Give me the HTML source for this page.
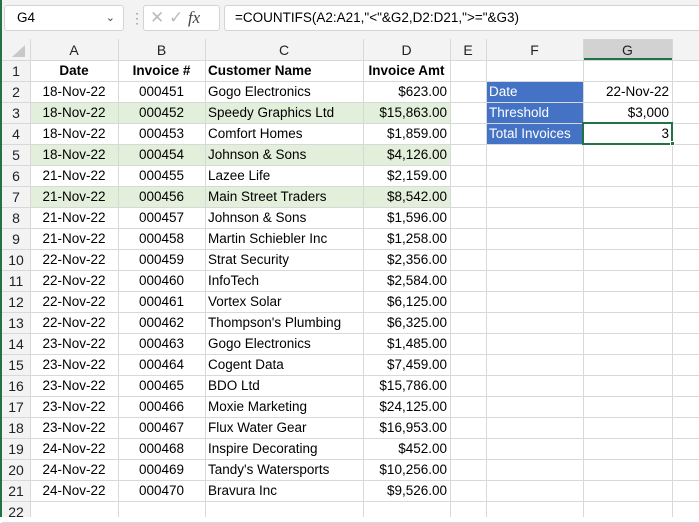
<!DOCTYPE html>
<html><head><style>
*{margin:0;padding:0;box-sizing:border-box}
body{width:699px;height:517px;overflow:hidden;background:#fff;font-family:"Liberation Sans",sans-serif;position:relative;font-size:13.5px;color:#000}
.top{position:absolute;left:0;top:0;width:699px;height:39px;background:#f3f3f3;border-left:2px solid #217346}
.box{position:absolute;background:#fff;border:1px solid #d4d4d4;border-radius:3px;height:26px;top:5px;line-height:24px}
.c{position:absolute;height:21px;line-height:22px;white-space:nowrap;overflow:hidden;padding:0 3px}
.gl{position:absolute;background:#d8d8d8}
</style></head><body>
<div class="top">
<div class="box" style="left:2px;width:120px;padding-left:12px">G4<span style="position:absolute;right:8px;top:0;font-size:11px;color:#444">&#8964;</span></div>
<div style="position:absolute;left:128px;top:10px;color:#999;font-size:14px">&#8942;</div>
<div class="box" style="left:141px;width:77px;color:#bbb;font-size:17px;padding-left:6px">&#10005; &#10003; <i style="color:#444;font-family:'Liberation Serif';font-size:17px">fx</i></div>
<div class="box" style="left:222px;width:480px;padding-left:10px;font-size:13.5px">=COUNTIFS(A2:A21,"&lt;"&amp;G2,D2:D21,"&gt;="&amp;G3)</div>
</div>
<div style="position:absolute;left:0;top:39px;width:2px;height:478px;background:#217346"></div>
<div id="g"></div>
<script>
var cols=[[30,118,'A','c'],[118,205,'B','c'],[205,363,'C','l'],[363,450,'D','r'],[450,486,'E','c'],[486,583,'F','l'],[583,672,'G','r'],[672,720,'','l']];
var data=[
["Date","Invoice #","Customer Name","Invoice Amt"],
["18-Nov-22","000451","Gogo Electronics","$623.00"],
["18-Nov-22","000452","Speedy Graphics Ltd","$15,863.00"],
["18-Nov-22","000453","Comfort Homes","$1,859.00"],
["18-Nov-22","000454","Johnson & Sons","$4,126.00"],
["21-Nov-22","000455","Lazee Life","$2,159.00"],
["21-Nov-22","000456","Main Street Traders","$8,542.00"],
["21-Nov-22","000457","Johnson & Sons","$1,596.00"],
["21-Nov-22","000458","Martin Schiebler Inc","$1,258.00"],
["22-Nov-22","000459","Strat Security","$2,356.00"],
["22-Nov-22","000460","InfoTech","$2,584.00"],
["22-Nov-22","000461","Vortex Solar","$6,125.00"],
["22-Nov-22","000462","Thompson's Plumbing","$6,325.00"],
["23-Nov-22","000463","Gogo Electronics","$1,485.00"],
["23-Nov-22","000464","Cogent Data","$7,459.00"],
["23-Nov-22","000465","BDO Ltd","$15,786.00"],
["23-Nov-22","000466","Moxie Marketing","$24,125.00"],
["23-Nov-22","000467","Flux Water Gear","$16,953.00"],
["24-Nov-22","000468","Inspire Decorating","$452.00"],
["24-Nov-22","000469","Tandy's Watersports","$10,256.00"],
["24-Nov-22","000470","Bravura Inc","$9,526.00"]];
var h='';
var T=60,R=21;
h+='<div style="position:absolute;left:2px;top:39px;width:697px;height:21px;background:#f3f3f3"></div>';
h+='<div style="position:absolute;left:2px;top:60px;width:28px;height:457px;background:#f3f3f3"></div>';
h+='<div style="position:absolute;left:583px;top:39px;width:89px;height:21px;background:#d2d2d2;border-bottom:2px solid #217346"></div>';
h+='<div style="position:absolute;left:12px;top:45px;width:0;height:0;border-left:13px solid transparent;border-bottom:12px solid #c8c8c8"></div>';
[3,5,7].forEach(function(r){h+='<div style="position:absolute;left:30px;top:'+(T+R*(r-1))+'px;width:420px;height:'+R+'px;background:#e2efda"></div>';});
h+='<div style="position:absolute;left:486px;top:'+(T+R)+'px;width:97px;height:'+(R*3)+'px;background:#4472c4"></div>';
for(var r=0;r<=22;r++){h+='<div class="gl" style="left:2px;top:'+(T+R*r)+'px;width:697px;height:1px"></div>';}
cols.forEach(function(c){h+='<div class="gl" style="left:'+c[0]+'px;top:39px;width:1px;height:478px"></div>';});
cols.forEach(function(c){h+='<div class="c" style="left:'+c[0]+'px;top:39px;width:'+(c[1]-c[0])+'px;text-align:center;font-size:14px;color:#222">'+c[2]+'</div>';});
for(var r=1;r<=22;r++){h+='<div class="c" style="left:2px;top:'+(T+R*(r-1))+'px;width:28px;text-align:center;font-size:14px;color:#222">'+r+'</div>';}
data.forEach(function(row,i){
 row.forEach(function(v,j){var c=cols[j];var al=c[3]=='c'?'center':c[3]=='r'?'right':'left';
 if(i==0)al='center';if(i==0&&j==2)al='left';
 h+='<div class="c" style="left:'+c[0]+'px;top:'+(T+R*i)+'px;width:'+(c[1]-c[0])+'px;text-align:'+al+';'+(i==0?'font-weight:bold':'')+'">'+v.replace('&','&amp;')+'</div>';});
});
var side=[["Date","22-Nov-22"],["Threshold","$3,000"],["Total Invoices","3"]];
side.forEach(function(s,i){
 h+='<div class="c" style="left:486px;top:'+(T+R*(i+1))+'px;width:97px;color:#fff">'+s[0]+'</div>';
 h+='<div class="c" style="left:583px;top:'+(T+R*(i+1))+'px;width:89px;text-align:right">'+s[1]+'</div>';
});
h+='<div style="position:absolute;left:582px;top:'+(T+R*3-1)+'px;width:91px;height:23px;border:2px solid #217346"></div>';
h+='<div style="position:absolute;left:670px;top:'+(T+R*4-3)+'px;width:5px;height:5px;background:#217346;border:1px solid #fff"></div>';
document.getElementById('g').innerHTML=h;
</script>
</body></html>
